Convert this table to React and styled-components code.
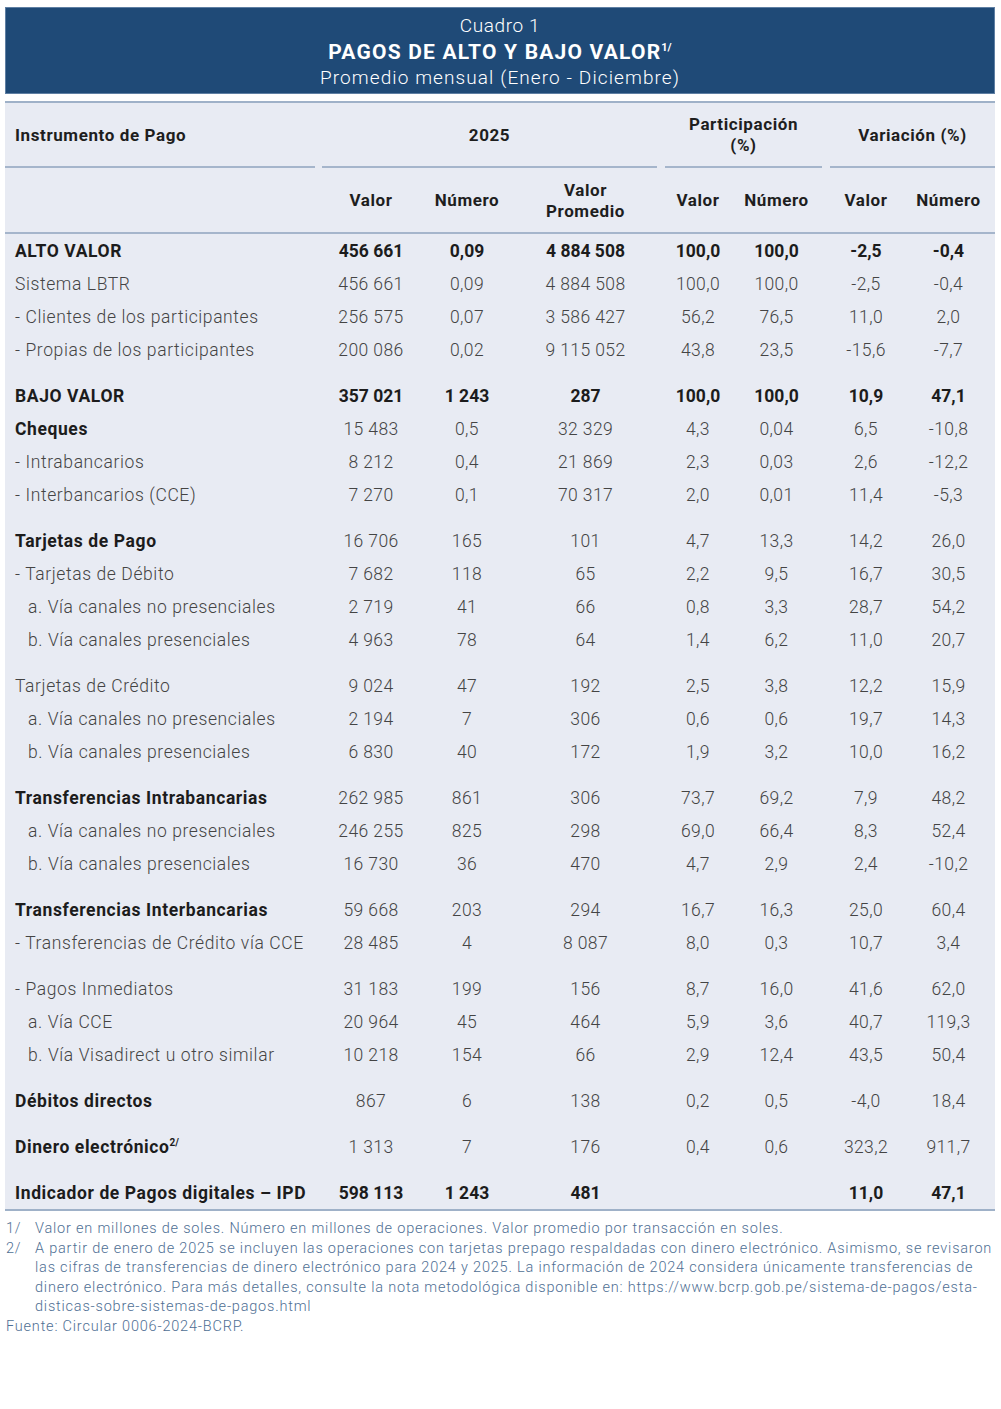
import React from "react"
import styled, { createGlobalStyle } from "styled-components";

const GlobalStyle = createGlobalStyle`
  body {
    margin: 0;
    background: #ffffff;
    font-family: Roboto, "Liberation Sans", sans-serif;
  }
`;

const COLS = "317px 98px 94px 143px 8px 66px 91px 8px 72px 93px";

const Page = styled.div`
  width: 990px;
  padding: 7px 6px 0 5px;
`;

const TitleBox = styled.div`
  background: #1f4a77;
  border: 1px solid #5f7fa3;
  color: #ffffff;
  text-align: center;
  height: 87px;
  box-sizing: border-box;
  padding-top: 5px;
  line-height: 26px;
`;

const TitleSmall = styled.div`
  font-size: 19px;
  font-weight: 300;
  letter-spacing: ${p => p.$ls || "0.8px"};
`;

const TitleMain = styled.div`
  font-size: 21px;
  font-weight: 700;
  letter-spacing: 1.2px;
  sup {
    font-size: 11px;
    vertical-align: 8px;
    line-height: 0;
    letter-spacing: 0;
  }
`;

const Table = styled.div`
  margin-top: 7px;
  background: #e8ebf3;
  border-top: 2px solid #9fb1c8;
  border-bottom: 2px solid #9fb1c8;
`;

const HeadRow = styled.div`
  display: grid;
  grid-template-columns: ${COLS};
  height: ${p => (p.$line ? "64px" : "65px")};
  border-bottom: ${p => (p.$line ? "2px solid #a5b5cb" : "none")};
`;

const HeadCell = styled.div`
  grid-column: ${p => p.$span};
  display: flex;
  align-items: center;
  justify-content: ${p => (p.$left ? "flex-start" : "center")};
  text-align: center;
  padding-left: ${p => (p.$left ? "10px" : "0")};
  padding-top: 1px;
  margin-right: ${p => p.$gap || 0}px;
  font-size: 17px;
  font-weight: 700;
  color: #1e1e1e;
  line-height: 21px;
  letter-spacing: 0.6px;
  border-bottom: ${p => (p.$under ? "2px solid #a5b5cb" : "none")};
  box-sizing: border-box;
`;

const Row = styled.div`
  display: grid;
  grid-template-columns: ${COLS};
  height: 33px;
  align-items: center;
  margin-top: ${p => (p.$space ? "13px" : "0")};
`;

const Label = styled.div`
  grid-column: 1;
  padding-left: ${p => 10 + (p.$indent || 0)}px;
  font-size: 17.5px;
  font-weight: ${p => (p.$bold ? 700 : 300)};
  color: ${p => (p.$bold ? "#1c1c1c" : "#444444")};
  letter-spacing: 0.6px;
  white-space: nowrap;
  sup {
    font-size: 10px;
    vertical-align: 7px;
    line-height: 0;
    letter-spacing: 0;
  }
`;

const Num = styled.div`
  grid-column: ${p => p.$col};
  text-align: center;
  font-size: 17.5px;
  font-weight: ${p => (p.$bold ? 700 : 300)};
  color: ${p => (p.$bold ? "#1c1c1c" : "#444444")};
  letter-spacing: ${p => (p.$bold ? "0" : "0.4px")};
  white-space: nowrap;
`;

const Notes = styled.div`
  padding: 8px 0 0 1px;
  margin-right: -6px;
  color: #4f6f94;
  font-size: 14.5px;
  font-weight: 300;
  line-height: 19.6px;
  letter-spacing: 0.8px;
`;

const Note = styled.div`
  display: grid;
  grid-template-columns: 29px 1fr;
`;

const NUM_COLS = [2, 3, 4, 6, 7, 9, 10];

const rows = [
  { label: "ALTO VALOR", bold: true, boldNums: true, v: ["456 661", "0,09", "4 884 508", "100,0", "100,0", "-2,5", "-0,4"] },
  { label: "Sistema LBTR", v: ["456 661", "0,09", "4 884 508", "100,0", "100,0", "-2,5", "-0,4"] },
  { label: "- Clientes de los participantes", v: ["256 575", "0,07", "3 586 427", "56,2", "76,5", "11,0", "2,0"] },
  { label: "- Propias de los participantes", v: ["200 086", "0,02", "9 115 052", "43,8", "23,5", "-15,6", "-7,7"] },
  { label: "BAJO VALOR", bold: true, boldNums: true, space: true, v: ["357 021", "1 243", "287", "100,0", "100,0", "10,9", "47,1"] },
  { label: "Cheques", bold: true, v: ["15 483", "0,5", "32 329", "4,3", "0,04", "6,5", "-10,8"] },
  { label: "- Intrabancarios", v: ["8 212", "0,4", "21 869", "2,3", "0,03", "2,6", "-12,2"] },
  { label: "- Interbancarios (CCE)", v: ["7 270", "0,1", "70 317", "2,0", "0,01", "11,4", "-5,3"] },
  { label: "Tarjetas de Pago", bold: true, space: true, v: ["16 706", "165", "101", "4,7", "13,3", "14,2", "26,0"] },
  { label: "- Tarjetas de Débito", v: ["7 682", "118", "65", "2,2", "9,5", "16,7", "30,5"] },
  { label: "a. Vía canales no presenciales", indent: 13, v: ["2 719", "41", "66", "0,8", "3,3", "28,7", "54,2"] },
  { label: "b. Vía canales presenciales", indent: 13, v: ["4 963", "78", "64", "1,4", "6,2", "11,0", "20,7"] },
  { label: "Tarjetas de Crédito", space: true, v: ["9 024", "47", "192", "2,5", "3,8", "12,2", "15,9"] },
  { label: "a. Vía canales no presenciales", indent: 13, v: ["2 194", "7", "306", "0,6", "0,6", "19,7", "14,3"] },
  { label: "b. Vía canales presenciales", indent: 13, v: ["6 830", "40", "172", "1,9", "3,2", "10,0", "16,2"] },
  { label: "Transferencias Intrabancarias", bold: true, space: true, v: ["262 985", "861", "306", "73,7", "69,2", "7,9", "48,2"] },
  { label: "a. Vía canales no presenciales", indent: 13, v: ["246 255", "825", "298", "69,0", "66,4", "8,3", "52,4"] },
  { label: "b. Vía canales presenciales", indent: 13, v: ["16 730", "36", "470", "4,7", "2,9", "2,4", "-10,2"] },
  { label: "Transferencias Interbancarias", bold: true, space: true, v: ["59 668", "203", "294", "16,7", "16,3", "25,0", "60,4"] },
  { label: "- Transferencias de Crédito vía CCE", v: ["28 485", "4", "8 087", "8,0", "0,3", "10,7", "3,4"] },
  { label: "- Pagos Inmediatos", space: true, v: ["31 183", "199", "156", "8,7", "16,0", "41,6", "62,0"] },
  { label: "a. Vía CCE", indent: 13, v: ["20 964", "45", "464", "5,9", "3,6", "40,7", "119,3"] },
  { label: "b. Vía Visadirect u otro similar", indent: 13, v: ["10 218", "154", "66", "2,9", "12,4", "43,5", "50,4"] },
  { label: "Débitos directos", bold: true, space: true, v: ["867", "6", "138", "0,2", "0,5", "-4,0", "18,4"] },
  { label: "Dinero electrónico", sup: "2/", bold: true, space: true, v: ["1 313", "7", "176", "0,4", "0,6", "323,2", "911,7"] },
  { label: "Indicador de Pagos digitales – IPD", bold: true, boldNums: true, space: true, v: ["598 113", "1 243", "481", "", "", "11,0", "47,1"] },
];

const App = () => {
  return (
    <Page>
      <GlobalStyle />
      <TitleBox>
        <TitleSmall $ls="0.6px">Cuadro 1</TitleSmall>
        <TitleMain>PAGOS DE ALTO Y BAJO VALOR<sup>1/</sup></TitleMain>
        <TitleSmall $ls="1.1px">Promedio mensual (Enero - Diciembre)</TitleSmall>
      </TitleBox>
      <Table>
        <HeadRow>
          <HeadCell $span="1" $left $gap={7} $under>Instrumento de Pago</HeadCell>
          <HeadCell $span="2 / 5" $under>2025</HeadCell>
          <HeadCell $span="6 / 8" $under>Participación<br />(%)</HeadCell>
          <HeadCell $span="9 / 11" $under>Variación (%)</HeadCell>
        </HeadRow>
        <HeadRow $line>
          <HeadCell $span="1" />
          <HeadCell $span="2">Valor</HeadCell>
          <HeadCell $span="3">Número</HeadCell>
          <HeadCell $span="4">Valor<br />Promedio</HeadCell>
          <HeadCell $span="6">Valor</HeadCell>
          <HeadCell $span="7">Número</HeadCell>
          <HeadCell $span="9">Valor</HeadCell>
          <HeadCell $span="10">Número</HeadCell>
        </HeadRow>
        {rows.map((r, i) => (
          <Row key={i} $space={r.space}>
            <Label $bold={r.bold} $indent={r.indent}>
              {r.label}{r.sup && <sup>{r.sup}</sup>}
            </Label>
            {r.v.map((val, j) => (
              <Num key={j} $col={NUM_COLS[j]} $bold={r.boldNums}>{val}</Num>
            ))}
          </Row>
        ))}
      </Table>
      <Notes>
        <Note>
          <span>1/</span>
          <span>Valor en millones de soles. Número en millones de operaciones. Valor promedio por transacción en soles.</span>
        </Note>
        <Note>
          <span>2/</span>
          <span>{"A partir de enero de 2025 se incluyen las operaciones con tarjetas prepago respaldadas con dinero electrónico. Asimismo, se revisaron las cifras de transferencias de dinero electrónico para 2024 y 2025. La información de 2024 considera únicamente transferencias de dinero electrónico. Para más detalles, consulte la nota metodológica disponible en: https://www.bcrp.gob.pe/sistema-de-pagos/esta-\u200Bdisticas-sobre-sistemas-de-pagos.html"}</span>
        </Note>
        <div>Fuente: Circular 0006-2024-BCRP.</div>
      </Notes>
    </Page>
  )
}

export default App
